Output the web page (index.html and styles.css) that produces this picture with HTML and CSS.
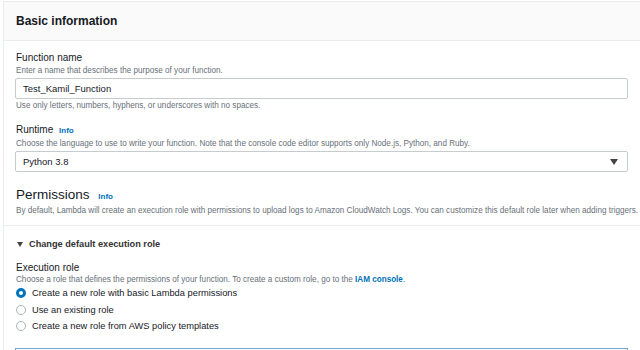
FILE: index.html
```html
<!DOCTYPE html>
<html lang="en">
<head>
    <meta charset="UTF-8">
    <meta name="viewport" content="width=device-width, initial-scale=1.0">
    <title>Create function</title>
    <link rel="stylesheet" href="styles.css">
</head>
<body>
    <div class="panel">
        <div class="panel-header">
            <h2>Basic information</h2>
        </div>

        <div class="panel-body">
            <div class="field first">
                <div class="label">Function name</div>
                <div class="desc">Enter a name that describes the purpose of your function.</div>
                <div class="input">Test_Kamil_Function</div>
                <div class="hint">Use only letters, numbers, hyphens, or underscores with no spaces.</div>
            </div>

            <div class="field">
                <div class="label">Runtime <a class="info" href="#">Info</a></div>
                <div class="desc">Choose the language to use to write your function. Note that the console code editor supports only Node.js, Python, and Ruby.</div>
                <div class="input select">
                    <span>Python 3.8</span>
                    <span class="caret"></span>
                </div>
            </div>

            <h3 class="section-title">Permissions <a class="info" href="#">Info</a></h3>
            <div class="desc">By default, Lambda will create an execution role with permissions to upload logs to Amazon CloudWatch Logs. You can customize this default role later when adding triggers.</div>
        </div>

        <div class="panel-body expander">
            <div class="expander-title"><span class="tri"></span>Change default execution role</div>

            <div class="field role">
                <div class="label">Execution role</div>
                <div class="desc">Choose a role that defines the permissions of your function. To create a custom role, go to the <a class="link" href="#">IAM console</a>.</div>
                <div class="radios">
                    <label class="radio checked"><span class="dot"></span>Create a new role with basic Lambda permissions</label>
                    <label class="radio"><span class="dot"></span>Use an existing role</label>
                    <label class="radio"><span class="dot"></span>Create a new role from AWS policy templates</label>
                </div>
            </div>

            <div class="notice"></div>
        </div>
    </div>
</body>
</html>
```

FILE: styles.css
```css
body {
    margin: 0;
    background-color: white;
    font-family: "Liberation Sans", Arial, sans-serif;
    color: #16191f;
    overflow: hidden;
}

.panel {
    margin: 1px 0 0 3px;
    border: 1px solid #eaeded;
    border-right: none;
    border-bottom: none;
}

.panel-header {
    height: 38px;
    display: flex;
    align-items: center;
    padding: 0 12px;
    background-color: #fafafa;
    border-bottom: 1px solid #eaeded;
}

.panel-header h2 {
    margin: 0;
    font-size: 12px;
    font-weight: bold;
}

.panel-body {
    padding: 10px 12px 8px 11px;
}

.field + .field {
    margin-top: 11px;
}

.label {
    font-size: 10px;
    line-height: 14px;
    padding-left: 1px;
}

.desc,
.hint {
    font-size: 8.15px;
    line-height: 12px;
    color: #687078;
    padding-left: 1px;
    white-space: nowrap;
}

.info {
    margin-left: 3px;
    font-size: 8px;
    font-weight: bold;
    color: #0073bb;
    text-decoration: none;
}

.link {
    font-weight: bold;
    color: #0073bb;
    text-decoration: none;
}

.input {
    margin-top: 1px;
    height: 19px;
    border: 1px solid #c6cccd;
    border-radius: 2px;
    padding: 0 7px;
    display: flex;
    align-items: center;
    font-size: 9.5px;
}

.select {
    justify-content: space-between;
    padding-right: 9px;
}

.caret {
    width: 0;
    height: 0;
    border-left: 4px solid transparent;
    border-right: 4px solid transparent;
    border-top: 6px solid #444;
}

.hint {
    margin-top: 1px;
}

.section-title {
    margin: 15px 0 0;
    font-size: 13.5px;
    font-weight: normal;
    line-height: 16px;
    padding-left: 1px;
}

.section-title .info {
    margin-left: 5px;
}

.expander {
    border-top: 1px solid #eaeded;
    padding-top: 11px;
}

.expander-title {
    display: flex;
    align-items: center;
    font-size: 9.2px;
    font-weight: bold;
    line-height: 14px;
    color: #333;
    padding-left: 2px;
}

.tri {
    width: 0;
    height: 0;
    border-left: 3px solid transparent;
    border-right: 3px solid transparent;
    border-top: 5px solid #444;
    margin-right: 6px;
}

.role {
    margin-top: 11px;
}

.role .label {
    line-height: 12px;
}

.radios {
    margin-top: -1px;
}

.radio {
    display: flex;
    align-items: center;
    height: 16.5px;
    font-size: 9.3px;
    padding-left: 1px;
}

.dot {
    width: 8px;
    height: 8px;
    border: 1px solid #aab7b8;
    border-radius: 50%;
    margin-right: 6px;
    box-sizing: content-box;
}

.radio.checked .dot {
    width: 4px;
    height: 4px;
    border: 3px solid #0073bb;
    background-color: white;
}

.notice {
    margin-top: 13px;
    height: 30px;
    border: 1px solid #79a9c8;
    background-color: #f1faff;
}
```
